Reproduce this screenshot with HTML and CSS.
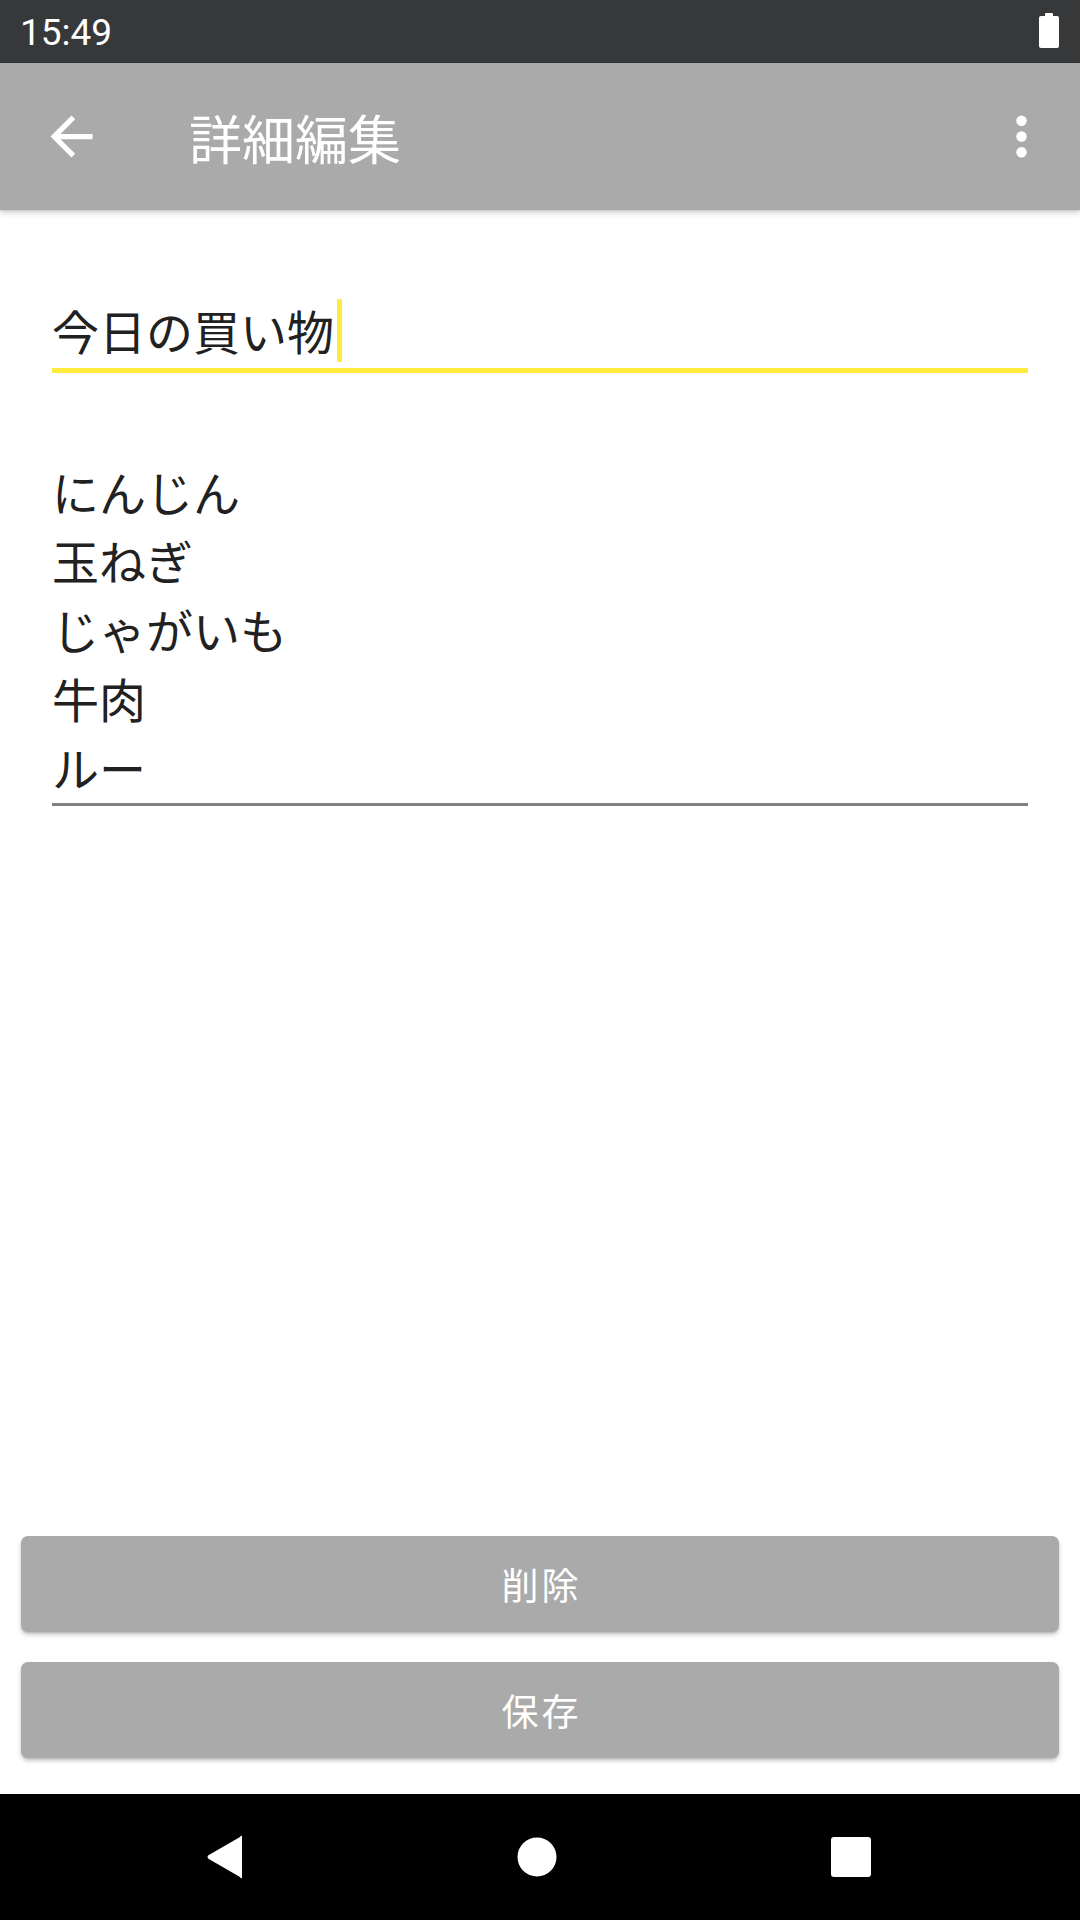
FILE: index.html
```html
<!DOCTYPE html>
<html lang="ja">
<head>
<meta charset="utf-8">
<title>詳細編集</title>
<link rel="stylesheet" href="styles.css">
</head>
<body>
<div class="screen">
  <div class="status-bar">
    <span class="time">15:49</span>
    <svg class="battery" width="20" height="35" viewBox="0 0 20 35">
      <rect x="6" y="0" width="8" height="4" rx="1" fill="#fff"/>
      <rect x="0" y="3" width="20" height="32" rx="2" fill="#fff"/>
    </svg>
  </div>
  <div class="app-bar">
    <svg class="back" width="63" height="63" viewBox="0 0 24 24">
      <path d="M20 11H7.83l5.59-5.59L12 4l-8 8 8 8 1.41-1.41L7.83 13H20v-2z" fill="#fff"/>
    </svg>
    <span class="title">詳細編集</span>
    <svg class="more" width="63" height="63" viewBox="0 0 24 24">
      <circle cx="12" cy="6" r="2" fill="#fff"/>
      <circle cx="12" cy="12" r="2" fill="#fff"/>
      <circle cx="12" cy="18" r="2" fill="#fff"/>
    </svg>
  </div>
  <main class="content">
    <div class="fields">
      <div class="field title-field">今日の買い物<span class="cursor"></span></div>
      <div class="field body-field">にんじん<br>玉ねぎ<br>じゃがいも<br>牛肉<br>ルー</div>
    </div>
    <div class="actions">
      <button class="btn">削除</button>
      <button class="btn">保存</button>
    </div>
  </main>
  <div class="nav-bar">
    <svg class="nav-icon" width="36" height="44" viewBox="0 0 36 44">
      <path d="M35 1 L35 43 Q34 44 33 42 L1 23.5 Q0 22 1 20.5 L33 2 Q34 0 35 1 Z" fill="#fff"/>
    </svg>
    <svg class="nav-icon" width="40" height="40" viewBox="0 0 40 40">
      <circle cx="20" cy="20" r="19.5" fill="#fff"/>
    </svg>
    <svg class="nav-icon" width="40" height="40" viewBox="0 0 40 40">
      <rect x="0" y="0" width="40" height="40" rx="3" fill="#fff"/>
    </svg>
  </div>
</div>
</body>
</html>
```

FILE: styles.css
```css
* {
  box-sizing: border-box;
}

html, body {
  margin: 0;
  padding: 0;
  background: #ffffff;
}

body {
  font-family: "Noto Sans CJK JP", "Noto Sans", sans-serif;
  color: #212121;
}

.screen {
  width: 1080px;
  height: 1920px;
  display: flex;
  flex-direction: column;
  overflow: hidden;
}

.status-bar {
  height: 63px;
  flex: 0 0 63px;
  background: #37383a;
  display: flex;
  align-items: center;
  justify-content: space-between;
  padding: 0 21px 0 20px;
}

.time {
  font-family: Roboto, "Liberation Sans", sans-serif;
  font-size: 37px;
  color: #ffffff;
  line-height: 1;
  margin-top: 2px;
}

.battery {
  display: block;
  margin-top: -2px;
}

.app-bar {
  position: relative;
  z-index: 2;
  height: 147px;
  flex: 0 0 147px;
  background: #aaaaaa;
  display: flex;
  align-items: center;
  padding: 0 27px 0 40px;
  box-shadow: 0 3px 6px rgba(0, 0, 0, 0.16), 0 1px 2px rgba(0, 0, 0, 0.1);
}

.back {
  display: block;
  flex: 0 0 63px;
}

.title {
  flex: 1;
  margin-left: 86px;
  font-size: 53px;
  line-height: 1;
  color: #ffffff;
  margin-top: 2px;
}

.more {
  display: block;
  flex: 0 0 63px;
}

.content {
  flex: 1;
  display: flex;
  flex-direction: column;
  justify-content: space-between;
}

.fields {
  padding: 0 52px;
}

.field {
  font-size: 47px;
  line-height: 69px;
  color: #212121;
}

.title-field {
  margin-top: 85px;
  padding-bottom: 4px;
  border-bottom: 5px solid #ffeb3b;
  display: flex;
  align-items: center;
}

.cursor {
  display: inline-block;
  width: 5px;
  height: 63px;
  background: #ffeb3b;
  margin-left: 3px;
  margin-top: 2px;
}

.body-field {
  margin-top: 83px;
  padding-bottom: 2px;
  border-bottom: 3px solid #808080;
}

.actions {
  display: flex;
  flex-direction: column;
  gap: 30px;
  padding: 0 21px 36px 21px;
}

.btn {
  height: 96px;
  border: none;
  border-radius: 7px;
  background: #aaaaaa;
  color: #ffffff;
  font-family: "Noto Sans CJK JP", "Noto Sans", sans-serif;
  font-size: 37px;
  letter-spacing: 3px;
  padding: 0 0 0 3px;
  box-shadow: 0 3px 4px rgba(0, 0, 0, 0.2), 0 1px 2px rgba(0, 0, 0, 0.12);
}

.nav-bar {
  height: 126px;
  flex: 0 0 126px;
  background: #000000;
  display: flex;
  align-items: center;
  justify-content: space-between;
  padding: 0 209px 0 207px;
}

.nav-icon {
  display: block;
}
```
